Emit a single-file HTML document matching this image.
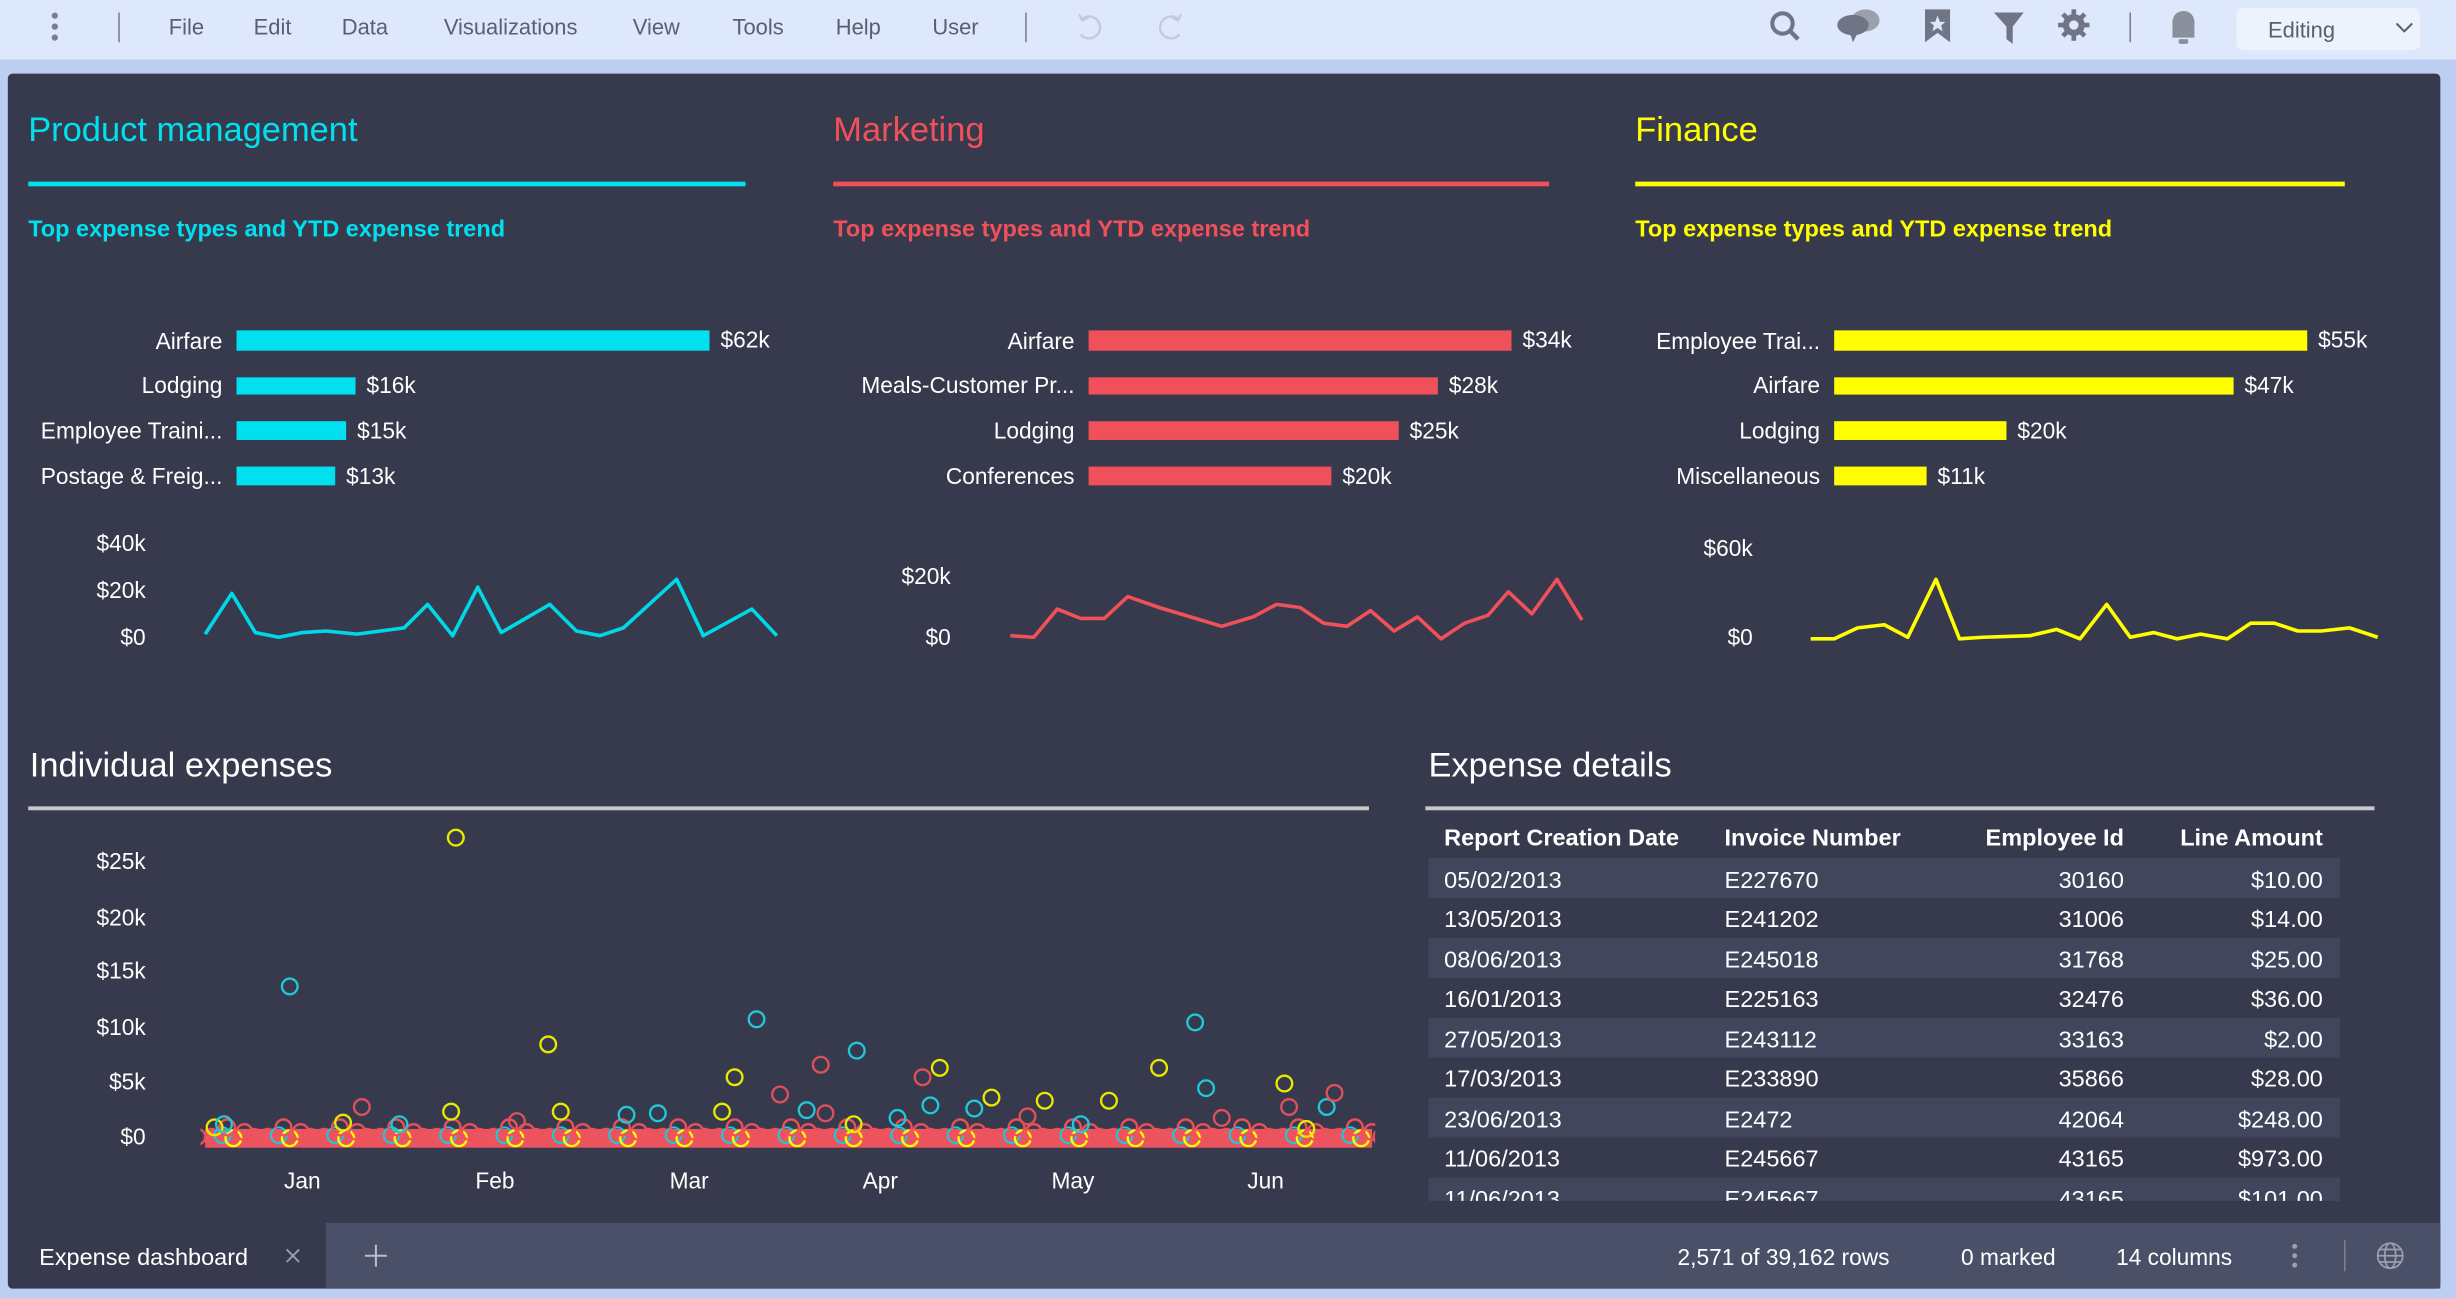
<!DOCTYPE html>
<html><head><meta charset="utf-8"><style>
html,body{margin:0;padding:0;width:2456px;height:1298px;overflow:hidden;background:#bccff2}
svg{display:block}
text{font-family:"Liberation Sans",sans-serif}
</style></head><body>
<svg width="2456" height="1298" viewBox="0 0 1568 829" preserveAspectRatio="none" xmlns="http://www.w3.org/2000/svg">
<defs>
<pattern id="dots" x="131" y="712" width="36" height="22" patternUnits="userSpaceOnUse">
<circle cx="4" cy="14" r="5" fill="none" stroke="#f0505a" stroke-width="1.5"/>
<circle cx="11" cy="13" r="5" fill="none" stroke="#00d8e8" stroke-width="1.2"/>
<circle cx="18" cy="15" r="5" fill="none" stroke="#ffff00" stroke-width="1.5"/>
<circle cx="25" cy="11" r="5" fill="none" stroke="#f0505a" stroke-width="1.5"/>
<circle cx="31" cy="14" r="5" fill="none" stroke="#f0505a" stroke-width="1.5"/>
<circle cx="14" cy="8" r="5" fill="none" stroke="#f0505a" stroke-width="1.5"/>
</pattern>
</defs>
<rect width="1568" height="829" fill="#bccff2"/>
<rect width="1568" height="38" fill="#dde8fd"/>
<g fill="#7a7f8e"><circle cx="35" cy="10" r="2"/><circle cx="35" cy="17" r="2"/><circle cx="35" cy="24" r="2"/></g>
<rect x="75.5" y="8" width="1" height="19" fill="#7a7f8e"/>
<g font-size="14" fill="#5a5f6e" text-anchor="middle">
<text x="119" y="22">File</text><text x="174" y="22">Edit</text><text x="233" y="22">Data</text>
<text x="326" y="22">Visualizations</text><text x="419" y="22">View</text><text x="484" y="22">Tools</text>
<text x="548" y="22">Help</text><text x="610" y="22">User</text></g>
<rect x="654.5" y="8" width="1" height="19" fill="#7a7f8e"/>
<g fill="none" stroke="#c4cad6" stroke-width="1.5">
<path d="M691 12 A7 7 0 1 1 690 22"/><path d="M689 9 L691 13 L695 11"/>
<path d="M752 12 A7 7 0 1 0 753 22"/><path d="M754 9 L752 13 L748 11"/></g>
<g fill="#707585" stroke="none">
<circle cx="1138" cy="15" r="6.5" fill="none" stroke="#707585" stroke-width="2.6"/>
<path d="M1142 19 L1148 25" stroke="#707585" stroke-width="2.8"/>
<ellipse cx="1191" cy="13" rx="9" ry="7" fill="#9aa0ae"/>
<ellipse cx="1183" cy="16" rx="10" ry="6.5"/>
<path d="M1181 21 L1183 27 L1186 21Z"/>
<path d="M1229 6 H1245 V27 L1237 21 L1229 27Z"/>
<path d="M1237 10 L1238.5 14 L1242 14 L1239.3 16.3 L1240.3 20 L1237 17.8 L1233.7 20 L1234.7 16.3 L1232 14 L1235.5 14Z" fill="#dde8fd"/>
<path d="M1273 8 H1292 L1285 17 V28 L1281 25 V17Z"/>
<circle cx="1324" cy="16" r="7"/>
<g stroke="#707585" stroke-width="3"><path d="M1324 6V26M1314 16H1334M1317 9L1331 23M1331 9L1317 23"/></g>
<circle cx="1324" cy="16" r="3" fill="#dde8fd"/>
<path d="M1387 24 V14 A7 7 0 0 1 1401 14 V24Z" fill="#8a8f9c"/>
<rect x="1391" y="25" width="6" height="3" rx="1" fill="#8a8f9c"/>
</g>
<rect x="1359.5" y="8" width="1" height="19" fill="#7a7f8e"/>
<rect x="1428" y="5" width="117" height="27" rx="4" fill="#edf2fd"/>
<text x="1448" y="24" font-size="14" fill="#5a5f6e">Editing</text>
<path d="M1530 15 L1535 20 L1540 15" fill="none" stroke="#5a5f6e" stroke-width="1.3"/>
<rect x="5" y="47" width="1553" height="776" rx="3" fill="#363a4c"/>
<rect x="208" y="781" width="1350" height="42" fill="#4a5068"/>
<g font-size="22"><text x="18" y="90" fill="#00e0ef">Product management</text>
<text x="532" y="90" fill="#f0505a">Marketing</text>
<text x="1044" y="90" fill="#ffff00">Finance</text></g>
<rect x="18" y="116" width="458" height="3" fill="#00e0ef"/>
<rect x="532" y="116" width="457" height="3" fill="#f0505a"/>
<rect x="1044" y="116" width="453" height="3" fill="#ffff00"/>
<g font-size="15" font-weight="bold"><text x="18" y="151" fill="#00e0ef">Top expense types and YTD expense trend</text>
<text x="532" y="151" fill="#f0505a">Top expense types and YTD expense trend</text>
<text x="1044" y="151" fill="#ffff00">Top expense types and YTD expense trend</text></g>
<g font-size="14.5" fill="#ffffff">
<g text-anchor="end">
<text x="142" y="223">Airfare</text><text x="142" y="251">Lodging</text><text x="142" y="280">Employee Traini...</text><text x="142" y="309">Postage &amp; Freig...</text>
<text x="686" y="223">Airfare</text><text x="686" y="251">Meals-Customer Pr...</text><text x="686" y="280">Lodging</text><text x="686" y="309">Conferences</text>
<text x="1162" y="223">Employee Trai...</text><text x="1162" y="251">Airfare</text><text x="1162" y="280">Lodging</text><text x="1162" y="309">Miscellaneous</text>
</g>
<text x="460" y="222">$62k</text><text x="234" y="251">$16k</text><text x="228" y="280">$15k</text><text x="221" y="309">$13k</text>
<text x="972" y="222">$34k</text><text x="925" y="251">$28k</text><text x="900" y="280">$25k</text><text x="857" y="309">$20k</text>
<text x="1480" y="222">$55k</text><text x="1433" y="251">$47k</text><text x="1288" y="280">$20k</text><text x="1237" y="309">$11k</text>
</g>
<g fill="#00e0ef"><rect x="151" y="211" width="302" height="13"/><rect x="151" y="241" width="76" height="11"/><rect x="151" y="269" width="70" height="12"/><rect x="151" y="298" width="63" height="12"/></g>
<g fill="#f0505a"><rect x="695" y="211" width="270" height="13"/><rect x="695" y="241" width="223" height="11"/><rect x="695" y="269" width="198" height="12"/><rect x="695" y="298" width="155" height="12"/></g>
<g fill="#ffff00"><rect x="1171" y="211" width="302" height="13"/><rect x="1171" y="241" width="255" height="11"/><rect x="1171" y="269" width="110" height="12"/><rect x="1171" y="298" width="59" height="12"/></g>
<g font-size="14.5" fill="#ffffff" text-anchor="end">
<text x="93" y="352">$40k</text><text x="93" y="382">$20k</text><text x="93" y="412">$0</text>
<text x="607" y="373">$20k</text><text x="607" y="412">$0</text>
<text x="1119" y="355">$60k</text><text x="1119" y="412">$0</text></g>
<g fill="none" stroke-width="2.3" stroke-linejoin="round">
<polyline stroke="#00d8e8" points="131,405 148,379 163,404 178,407 193,404 208,403 228,405 258,401 273,386 289,406 305,375 320,404 351,386 368,403 383,406 398,401 432,370 449,406 480,389 496,406"/>
<polyline stroke="#f0505a" points="645,406 660,407 675,389 690,395 705,395 720,381 740,388 760,394 780,400 800,394 815,386 830,388 845,398 860,400 875,390 890,403 905,394 920,408 935,398 950,393 963,378 978,392 994,370 1010,396"/>
<polyline stroke="#ffff00" points="1156,408 1171,408 1186,401 1203,399 1218,407 1236,370 1251,408 1266,407 1296,406 1313,402 1328,408 1345,386 1360,407 1375,404 1390,408 1405,405 1422,408 1437,398 1452,398 1467,403 1482,403 1500,401 1518,407"/>
</g>
<g font-size="22" fill="#ffffff"><text x="19" y="496">Individual expenses</text><text x="912" y="496">Expense details</text></g>
<rect x="18" y="515" width="856" height="2.5" fill="#c8c8c8"/>
<rect x="910" y="515" width="606" height="2.5" fill="#c8c8c8"/>
<g font-size="14.5" fill="#ffffff" text-anchor="end">
<text x="93" y="555">$25k</text><text x="93" y="591">$20k</text><text x="93" y="625">$15k</text><text x="93" y="661">$10k</text><text x="93" y="696">$5k</text><text x="93" y="731">$0</text></g>
<g font-size="14.5" fill="#ffffff" text-anchor="middle">
<text x="193" y="759">Jan</text><text x="316" y="759">Feb</text><text x="440" y="759">Mar</text><text x="562" y="759">Apr</text><text x="685" y="759">May</text><text x="808" y="759">Jun</text></g>
<rect x="131" y="721" width="745" height="12" fill="#eb5560"/>
<rect x="128" y="712" width="750" height="22" fill="url(#dots)"/>
<g fill="none" stroke-width="1.5">
<g stroke="#e8e800"><circle cx="291" cy="535" r="5"/><circle cx="350" cy="667" r="5"/><circle cx="469" cy="688" r="5"/><circle cx="600" cy="682" r="5"/><circle cx="740" cy="682" r="5"/><circle cx="820" cy="692" r="5"/><circle cx="633" cy="701" r="5"/><circle cx="667" cy="703" r="5"/><circle cx="708" cy="703" r="5"/><circle cx="288" cy="710" r="5"/><circle cx="358" cy="710" r="5"/><circle cx="461" cy="710" r="5"/><circle cx="834" cy="721" r="5"/><circle cx="219" cy="717" r="5"/><circle cx="137" cy="720" r="5"/><circle cx="545" cy="718" r="5"/></g>
<g stroke="#20c8d8"><circle cx="185" cy="630" r="5"/><circle cx="483" cy="651" r="5"/><circle cx="547" cy="671" r="5"/><circle cx="763" cy="653" r="5"/><circle cx="770" cy="695" r="5"/><circle cx="400" cy="712" r="5"/><circle cx="420" cy="711" r="5"/><circle cx="515" cy="709" r="5"/><circle cx="573" cy="714" r="5"/><circle cx="594" cy="706" r="5"/><circle cx="622" cy="708" r="5"/><circle cx="847" cy="707" r="5"/><circle cx="143" cy="718" r="5"/><circle cx="255" cy="718" r="5"/><circle cx="690" cy="718" r="5"/></g>
<g stroke="#e0505a"><circle cx="524" cy="680" r="5"/><circle cx="589" cy="688" r="5"/><circle cx="852" cy="698" r="5"/><circle cx="498" cy="699" r="5"/><circle cx="231" cy="707" r="5"/><circle cx="527" cy="711" r="5"/><circle cx="656" cy="713" r="5"/><circle cx="780" cy="714" r="5"/><circle cx="823" cy="707" r="5"/><circle cx="330" cy="716" r="5"/></g>
</g>
<g font-size="15" font-weight="bold" fill="#ffffff">
<text x="922" y="540">Report Creation Date</text><text x="1101" y="540">Invoice Number</text>
<text x="1356" y="540" text-anchor="end">Employee Id</text><text x="1483" y="540" text-anchor="end">Line Amount</text></g>
<g fill="#41465d"><rect x="912" y="548" width="582" height="25.5"/><rect x="912" y="599" width="582" height="25.5"/><rect x="912" y="650" width="582" height="25.5"/><rect x="912" y="701" width="582" height="25.5"/><rect x="912" y="752" width="582" height="15"/></g>
<clipPath id="tc"><rect x="900" y="548" width="600" height="219"/></clipPath>
<g font-size="15" fill="#ffffff" clip-path="url(#tc)">
<g><text x="922" y="567">05/02/2013</text><text x="922" y="592">13/05/2013</text><text x="922" y="618">08/06/2013</text><text x="922" y="643">16/01/2013</text><text x="922" y="669">27/05/2013</text><text x="922" y="694">17/03/2013</text><text x="922" y="720">23/06/2013</text><text x="922" y="745">11/06/2013</text><text x="922" y="771">11/06/2013</text></g>
<g><text x="1101" y="567">E227670</text><text x="1101" y="592">E241202</text><text x="1101" y="618">E245018</text><text x="1101" y="643">E225163</text><text x="1101" y="669">E243112</text><text x="1101" y="694">E233890</text><text x="1101" y="720">E2472</text><text x="1101" y="745">E245667</text><text x="1101" y="771">E245667</text></g>
<g text-anchor="end"><text x="1356" y="567">30160</text><text x="1356" y="592">31006</text><text x="1356" y="618">31768</text><text x="1356" y="643">32476</text><text x="1356" y="669">33163</text><text x="1356" y="694">35866</text><text x="1356" y="720">42064</text><text x="1356" y="745">43165</text><text x="1356" y="771">43165</text></g>
<g text-anchor="end"><text x="1483" y="567">$10.00</text><text x="1483" y="592">$14.00</text><text x="1483" y="618">$25.00</text><text x="1483" y="643">$36.00</text><text x="1483" y="669">$2.00</text><text x="1483" y="694">$28.00</text><text x="1483" y="720">$248.00</text><text x="1483" y="745">$973.00</text><text x="1483" y="771">$101.00</text></g>
</g>
<text x="25" y="808" font-size="15" fill="#ffffff">Expense dashboard</text>
<path d="M183 798 L191 806 M191 798 L183 806" stroke="#9aa0ae" stroke-width="1.2"/>
<path d="M240 795 V809 M233 802 H247" stroke="#b8bdc8" stroke-width="1.3"/>
<g font-size="14.5" fill="#ffffff"><text x="1071" y="808">2,571 of 39,162 rows</text><text x="1252" y="808">0 marked</text><text x="1351" y="808">14 columns</text></g>
<g fill="#9aa0ae"><circle cx="1465" cy="796" r="1.6"/><circle cx="1465" cy="802" r="1.6"/><circle cx="1465" cy="808" r="1.6"/></g>
<rect x="1496.5" y="792" width="1" height="20" fill="#7a7f8e"/>
<g fill="none" stroke="#9aa0ae" stroke-width="1.1"><circle cx="1526" cy="802" r="8"/><ellipse cx="1526" cy="802" rx="3.5" ry="8"/><path d="M1518 802H1534M1519.5 798H1532.5M1519.5 806H1532.5"/></g>
</svg>
</body></html>
